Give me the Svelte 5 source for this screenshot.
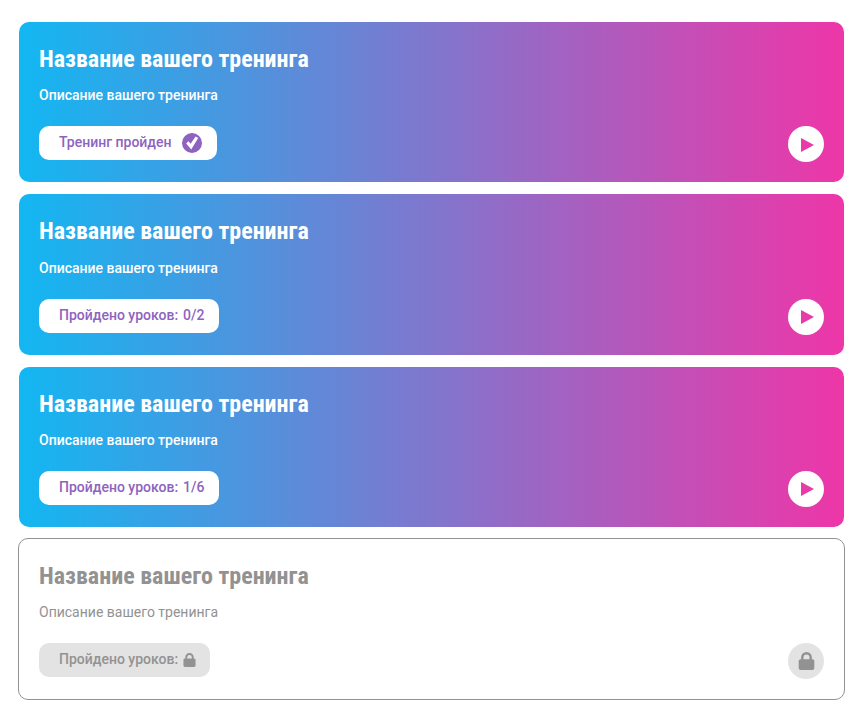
<script>
  const cards = [
    { label: 'Тренинг пройден', done: true },
    { label: 'Пройдено уроков:', value: '0/2' },
    { label: 'Пройдено уроков:', value: '1/6' },
    { label: 'Пройдено уроков:', locked: true }
  ];
</script>

<main class="list">
  {#each cards as c}
    <article class="card" class:locked={c.locked}>
      <h2>Название вашего тренинга</h2>
      <p>Описание вашего тренинга</p>
      <div class="foot">
        <div class="pill" class:done={c.done}>
          <span class="txt">{c.label}</span>
          {#if c.value}<span class="txt">{c.value}</span>{/if}
          {#if c.done}
            <svg class="check" viewBox="0 0 20 20" width="20" height="20">
              <circle cx="10" cy="10" r="10" fill="#8e63c0" />
              <path d="M4.2 10.4 6.4 8.2 8.6 10.8 13.6 3.4 16.2 5 9.2 16.4Z" fill="#fff" />
            </svg>
          {/if}
          {#if c.locked}
            <svg class="lock" viewBox="0 0 14 15" width="13" height="14">
              <path d="M3.5 7V4.5a3.5 3.5 0 0 1 7 0V7" fill="none" stroke="currentColor" stroke-width="2" />
              <rect x="0.5" y="6" width="13" height="9" rx="1.6" fill="currentColor" />
            </svg>
          {/if}
        </div>
        <div class="round">
          {#if c.locked}
            <svg viewBox="0 0 14 15" width="17" height="18">
              <path d="M3.5 7V4.5a3.5 3.5 0 0 1 7 0V7" fill="none" stroke="currentColor" stroke-width="2" />
              <rect x="0.5" y="6" width="13" height="9" rx="1.6" fill="currentColor" />
            </svg>
          {:else}
            <svg viewBox="0 0 13 14" width="13" height="14" class="play">
              <path d="M0 0 13 7 0 14Z" fill="#e83aa9" />
            </svg>
          {/if}
        </div>
      </div>
    </article>
  {/each}
</main>

<style>
  :global(body) {
    margin: 0;
    background: #fff;
  }
  .list {
    display: flex;
    flex-direction: column;
    gap: 12px;
    padding: 22px 15px 0 19px;
    font-family: Roboto, "Liberation Sans", sans-serif;
  }
  .card {
    box-sizing: border-box;
    height: 160.33px;
    padding: 20px 20px 20px;
    border-radius: 10px;
    color: #fff;
    background: linear-gradient(90deg, #12b7f2 0%, #ee36a8 100%);
    display: flex;
    flex-direction: column;
  }
  .card.locked {
    background: #fff;
    color: #929292;
    border: 1px solid #929292;
    margin: -1px -1px 0;
    height: 162.33px;
  }
  h2 {
    margin: 0;
    font-size: 24px;
    line-height: 34px;
    font-weight: 700;
    font-stretch: 75%;
    white-space: nowrap;
  }
  p {
    margin: 9.3px 0 0;
    font-size: 14px;
    line-height: 20px;
    font-weight: 500;
  }
  .locked p {
    font-weight: 400;
  }
  .foot {
    margin-top: auto;
    display: flex;
    justify-content: space-between;
    align-items: flex-start;
  }
  .pill {
    height: 34px;
    box-sizing: border-box;
    padding: 0 15px 0 20px;
    display: flex;
    align-items: center;
    gap: 5px;
    background: #fff;
    border-radius: 10px;
    color: #8e63c0;
    font-size: 14px;
    font-weight: 500;
    white-space: nowrap;
  }
  .txt {
    position: relative;
    top: -1px;
  }
  .pill.done {
    gap: 10px;
  }
  .locked .pill {
    background: #e3e3e3;
    color: #929292;
    padding-right: 14px;
  }
  .round {
    width: 36px;
    height: 36px;
    border-radius: 50%;
    background: #fff;
    display: flex;
    align-items: center;
    justify-content: center;
    flex: none;
  }
  .locked .round {
    background: #e3e3e3;
  }
  .play {
    margin-left: 2px;
    margin-top: 1px;
  }
</style>
